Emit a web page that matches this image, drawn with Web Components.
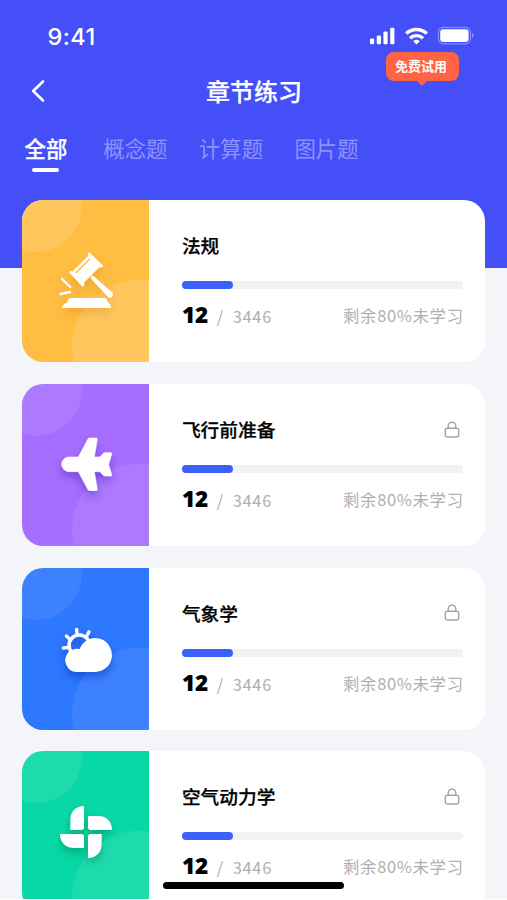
<!DOCTYPE html>
<html lang="zh-CN">
<head>
<meta charset="utf-8">
<title>章节练习</title>
<style>
  body {
    margin: 0;
    background: white;
    font-family: "Noto Sans CJK SC", "Liberation Sans", sans-serif;
  }
</style>
</head>
<body>
<app-screen>
  <status-bar slot="header" time="9:41"></status-bar>
  <nav-bar slot="header">章节练习<trial-badge slot="badge">免费试用</trial-badge></nav-bar>
  <tab-bar slot="header">
    <tab-item active>全部</tab-item>
    <tab-item>概念题</tab-item>
    <tab-item>计算题</tab-item>
    <tab-item>图片题</tab-item>
  </tab-bar>
  <chapter-card icon="gavel" color="#ffbd42" done="12" total="3446" note="剩余80%未学习">法规</chapter-card>
  <chapter-card icon="plane" color="#a56eff" done="12" total="3446" note="剩余80%未学习" locked>飞行前准备</chapter-card>
  <chapter-card icon="weather" color="#2e77ff" done="12" total="3446" note="剩余80%未学习" locked>气象学</chapter-card>
  <chapter-card icon="fan" color="#08d8a5" done="12" total="3446" note="剩余80%未学习" locked>空气动力学</chapter-card>
</app-screen>

<script>
class xElement extends HTMLElement {
  constructor() {
    super();
    this.attachShadow({ mode: "open" });
  }
  connectedCallback() {
    this.shadowRoot.innerHTML = `<style>${this.constructor.css}</style>${this.render()}`;
  }
}

class AppScreen extends xElement {
  static css = `
    :host {
      display: block;
      position: relative;
      height: 899px;
      overflow: hidden;
      background: #f3f5f9;
    }
    header {
      box-sizing: border-box;
      height: 268px;
      background: #444ff8;
    }
    main {
      display: flex;
      flex-direction: column;
      gap: 21.7px;
      margin-top: -67.6px;
      padding: 0 21.6px 0 22.4px;
    }
    .home {
      position: absolute;
      left: 163.4px;
      top: 882px;
      width: 181px;
      height: 7px;
      border-radius: 4px;
      background: black;
    }
  `;
  render() {
    return `
      <header><slot name="header"></slot></header>
      <main><slot></slot></main>
      <div class="home"></div>
    `;
  }
}

class StatusBar extends xElement {
  static css = `
    :host {
      display: flex;
      justify-content: space-between;
      align-items: center;
      height: 56px;
      padding: 16px 32px 0 47.5px;
      box-sizing: border-box;
      color: white;
    }
    time {
      font: 500 23.5px/28px Inter, "Liberation Sans", sans-serif;
      letter-spacing: .4px;
      padding-top: 2px;
    }
    svg {
      display: block;
    }
  `;
  render() {
    return `
      <time>${this.getAttribute("time")}</time>
      <svg width="106" height="20" viewBox="0 0 106 20" fill="white">
        <rect x="1" y="12.6" width="4.2" height="5.6" rx="1.2"/>
        <rect x="7.8" y="9.4" width="4.2" height="8.8" rx="1.2"/>
        <rect x="14.4" y="5.4" width="4.2" height="12.8" rx="1.2"/>
        <rect x="21.2" y="1.8" width="4.2" height="16.4" rx="1.2"/>
        <g fill="none" stroke="white" stroke-width="3.4">
          <path d="M37.2 7.6a15 15 0 0 1 20.6 0"/>
          <path d="M41 12.2a9.6 9.6 0 0 1 13 0"/>
        </g>
        <path d="M47.5 18.5l-3.3-3.3a5 5 0 0 1 6.6 0z"/>
        <rect x="69.4" y="1.4" width="32" height="16.4" rx="5" fill="none" stroke="white" stroke-opacity=".36" stroke-width="1.2"/>
        <rect x="71.2" y="3.2" width="28.4" height="12.8" rx="3.2"/>
        <path d="M102.8 7v5.2a2.8 2.8 0 0 0 0-5.2z" opacity=".42"/>
      </svg>
    `;
  }
}

class NavBar extends xElement {
  static css = `
    :host {
      display: grid;
      grid-template-columns: 60px 1fr 60px;
      align-items: center;
      position: relative;
      height: 70px;
      color: white;
    }
    svg {
      margin-left: 30px;
      margin-top: -1px;
    }
    h1 {
      margin: -1px 0 0 1px;
      text-align: center;
      font-size: 24px;
      line-height: 36px;
      font-weight: 500;
      -webkit-text-stroke: .25px;
    }
    ::slotted(trial-badge) {
      position: absolute;
      left: 385.5px;
      top: -4px;
    }
  `;
  render() {
    return `
      <svg width="16" height="24" viewBox="0 0 16 24" fill="none" stroke="white" stroke-width="2.6" stroke-linecap="round" stroke-linejoin="round">
        <path d="M13 2.5L3.2 12L13 21.5"/>
      </svg>
      <h1><slot></slot></h1>
      <slot name="badge"></slot>
    `;
  }
}

class TrialBadge extends xElement {
  static css = `
    :host {
      display: block;
      box-sizing: border-box;
      width: 73px;
      height: 29px;
      padding-right: 2px;
      border-radius: 8px;
      background: #ff6445;
      color: white;
      text-align: center;
      font-size: 13px;
      line-height: 28px;
      font-weight: 700;
    }
    :host::after {
      content: "";
      position: absolute;
      left: 30px;
      top: 28px;
      border: 6px solid transparent;
      border-top-color: #ff6445;
      border-bottom: 0;
    }
  `;
  render() {
    return `<slot></slot>`;
  }
}

class TabBar extends xElement {
  static css = `
    :host {
      display: flex;
      gap: 31.4px;
      padding: 6px 24.5px 0;
    }
  `;
  render() {
    return `<slot></slot>`;
  }
}

class TabItem extends xElement {
  static css = `
    :host {
      display: flex;
      flex-direction: column;
      align-items: center;
      font-size: 21.4px;
      line-height: 32px;
      color: #8c94fd;
    }
    :host([active]) {
      margin-right: 4.6px;
      color: white;
      font-weight: 500;
      -webkit-text-stroke: .25px;
    }
    :host([active])::after {
      content: "";
      width: 27px;
      height: 4.4px;
      margin-top: 4px;
      border-radius: 3px;
      background: white;
    }
  `;
  render() {
    return `<slot></slot>`;
  }
}

class ChapterIcon extends xElement {
  static css = `
    :host {
      display: grid;
      place-items: center;
      position: relative;
      overflow: hidden;
    }
    svg {
      grid-area: 1 / 1;
      display: block;
    }
    .icon {
      overflow: visible;
      filter: drop-shadow(0 5px 4px var(--shade));
    }
  `;
  // drop shadow colour and strength of the two background circles
  static tones = {
    gavel: ["rgba(190, 110, 0, .26)", .15],
    plane: ["rgba(75, 20, 180, .42)", .08],
    weather: ["rgba(0, 40, 170, .45)", .08],
    fan: ["rgba(0, 110, 80, .4)", .09],
  };
  static icons = {
    gavel: `
      <path d="M100 4L142 45L136 50L131 48L84 95L86 101L80 108L39 64L44 59L50 61L97 14L95 9Z"/>
      <path d="M60 65L102 23" stroke="#ffbd42" stroke-width="4"/>
      <path d="M103 80L110 73L168 124Q174 130 168 137Q161 144 155 137Z"/>
      <path d="M43 141H146Q150 141 152 145L155 154Q165 160 165 171H18Q19 160 32 156L37 145Q39 141 43 141Z"/>
      <path d="M18 84L43 108M13 129L42 123" stroke="white" stroke-width="7" stroke-linecap="round"/>
    `,
    plane: `
      <path d="M39 66H67L96 12Q98 9 101 9H121Q124 9 124 13L115 66H132L142 55Q144 53 147 53H164Q168 53 167 57L158 88L167 119Q168 123 164 123H147Q144 123 142 121L132 110H115L124 163Q124 167 121 167H101Q98 167 96 164L67 110H39A22 22 0 0 1 39 66Z" stroke="white" stroke-width="2" stroke-linejoin="round"/>
    `,
    weather: `
      <g fill="none" stroke="white" stroke-width="11" stroke-linecap="round">
        <circle cx="70" cy="79" r="31"/>
        <path d="M62 31L63 44M99 38L94 48M31 51L40 59M22 87L36 85" stroke-width="10"/>
      </g>
      <path d="M62 159A35 35 0 1 1 71 90A50 51 0 1 1 117 159Z"/>
    `,
    fan: `
      <path d="M84 12V76Q84 84 76 84H43V54C43 28 60 13 84 12Z"/>
      <path d="M96 42H128C152 42 168 60 168 84H104Q96 84 96 76Z"/>
      <path d="M96 168V104Q96 96 104 96H137V126C137 152 120 168 96 168Z"/>
      <path d="M12 96H76Q84 96 84 104V138H54C28 138 12 120 12 96Z"/>
    `,
  };
  render() {
    const name = this.getAttribute("name");
    const [shade, glow] = ChapterIcon.tones[name];
    return `
      <svg width="127" height="162" viewBox="0 0 127 162" fill="white" fill-opacity="${glow}">
        <circle cx="14" cy="6" r="46"/>
        <path d="M50 147A67 67 0 0 1 127 80.5V162H52A67 67 0 0 1 50 147Z"/>
      </svg>
      <svg class="icon" style="--shade: ${shade}" width="60" height="60" viewBox="0 0 180 180" fill="white">
        ${ChapterIcon.icons[name]}
      </svg>
    `;
  }
}

class ChapterCard extends xElement {
  static css = `
    :host {
      display: grid;
      grid-template-columns: 127px 1fr;
      height: 162px;
      flex: none;
      border-radius: 21px;
      overflow: hidden;
      background: white;
    }
    .body {
      padding: 31px 22px 0 32.5px;
    }
    .top, .bottom {
      display: flex;
      justify-content: space-between;
    }
    h2 {
      margin: 0;
      font-size: 18.7px;
      line-height: 28px;
      font-weight: 500;
      color: black;
      -webkit-text-stroke: .25px;
    }
    .lock {
      margin: 5.5px 3px 0 0;
    }
    .track {
      height: 8px;
      margin-top: 22px;
      border-radius: 4px;
      background: #f2f2f2;
    }
    .fill {
      width: 51.5px;
      height: 8px;
      border-radius: 4px;
      background: #3d5ffa;
    }
    .bottom {
      align-items: baseline;
      margin-top: 10px;
      color: #b0b0b0;
      line-height: 32px;
    }
    .count {
      font-size: 16.5px;
      letter-spacing: .7px;
      white-space: pre;
    }
    b {
      font: 900 22.5px/32px "Noto Sans", sans-serif;
      letter-spacing: -.2px;
      color: black;
    }
    .note {
      font-size: 16.4px;
      letter-spacing: .7px;
      margin-right: -.4px;
      position: relative;
      top: -1px;
    }
  `;
  render() {
    const attr = (name) => this.getAttribute(name);
    const lock = this.hasAttribute("locked") ? `
      <svg class="lock" width="16" height="18" viewBox="0 0 16 18" fill="none" stroke="#a4a4a4" stroke-width="1.4">
        <rect x="1.3" y="7.3" width="13.4" height="8.7" rx="2"/>
        <path d="M4.2 7.3V5a3.8 3.8 0 0 1 7.6 0V7.3"/>
      </svg>` : "";
    return `
      <chapter-icon name="${attr("icon")}" style="background: ${attr("color")}"></chapter-icon>
      <div class="body">
        <div class="top"><h2><slot></slot></h2>${lock}</div>
        <div class="track"><div class="fill"></div></div>
        <div class="bottom">
          <span class="count"><b>${attr("done")}</b>  /  ${attr("total")}</span>
          <span class="note">${attr("note")}</span>
        </div>
      </div>
    `;
  }
}

customElements.define("app-screen", AppScreen);
customElements.define("status-bar", StatusBar);
customElements.define("nav-bar", NavBar);
customElements.define("trial-badge", TrialBadge);
customElements.define("tab-bar", TabBar);
customElements.define("tab-item", TabItem);
customElements.define("chapter-icon", ChapterIcon);
customElements.define("chapter-card", ChapterCard);
</script>
</body>
</html>
